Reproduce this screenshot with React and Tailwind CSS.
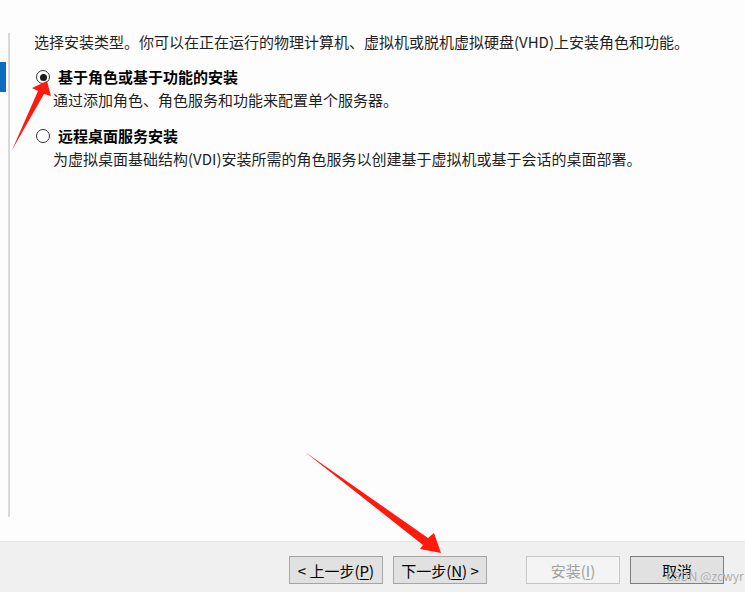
const FONT = "font-['Noto_Sans_CJK_SC','Noto_Sans',sans-serif]"

function Radio({ checked }) {
  return (
    <span className="flex h-[14px] w-[14px] shrink-0 items-center justify-center rounded-full border border-[#333] bg-white">
      {checked && <span className="h-[7px] w-[7px] rounded-full bg-[#1a1a1a]" />}
    </span>
  )
}

function Option({ checked, label, desc, className = '' }) {
  return (
    <div className={className}>
      <div className="flex h-[20px] items-center gap-[8px] pl-[2px]">
        <Radio checked={checked} />
        <span className="font-bold text-[15px] leading-[20px] text-black">{label}</span>
      </div>
      <p className="mt-[3px] pl-[19px] text-[15px] leading-[20px] text-[#1f1f1f]">{desc}</p>
    </div>
  )
}

function WizardButton({ children, disabled, dark }) {
  return (
    <button
      type="button"
      disabled={disabled}
      className={`flex h-[28px] w-[94px] items-center justify-center border text-[15px] leading-none ${
        disabled
          ? 'border-[#c6c6c6] bg-[#f4f4f4] text-[#a0a0a0]'
          : dark
            ? 'border-[#7f7f7f] bg-[#e1e1e1] text-black'
            : 'border-[#a5a5a5] bg-[#e1e1e1] text-black'
      }`}
    >
      {children}
    </button>
  )
}

function Arrows() {
  return (
    <svg
      className="pointer-events-none absolute left-0 top-0"
      width="745"
      height="592"
      viewBox="0 0 745 592"
      aria-hidden="true"
    >
      <polygon points="12,150 38,91 32,88 47,81 51,96 44,94" fill="#ff1a0d" />
      <polygon points="305,452 428,538 434,533 441,553 420,549 423,545" fill="#ff1a0d" />
    </svg>
  )
}

export default function App() {
  return (
    <div className={`relative flex h-[592px] w-[745px] flex-col overflow-hidden bg-[#fdfdfd] ${FONT}`}>
      <div className="flex flex-1">
        <div className="mt-[33px] h-[484px] w-[10px] shrink-0 border-r-2 border-[#d9d9d9]">
          <div className="mt-[29px] h-[30px] w-[6px] bg-[#0f6cbd]" />
        </div>
        <div className="pl-[24px] pt-[32px]">
          <p className="text-[15px] leading-[20px] text-[#1f1f1f]">
            选择安装类型。你可以在正在运行的物理计算机、虚拟机或脱机虚拟硬盘(VHD)上安装角色和功能。
          </p>
          <Option
            className="mt-[15px]"
            checked
            label="基于角色或基于功能的安装"
            desc="通过添加角色、角色服务和功能来配置单个服务器。"
          />
          <Option
            className="mt-[16px]"
            label="远程桌面服务安装"
            desc="为虚拟桌面基础结构(VDI)安装所需的角色服务以创建基于虚拟机或基于会话的桌面部署。"
          />
        </div>
      </div>

      <div className="flex h-[51px] shrink-0 items-start border-t border-[#e3e3e3] bg-[#f0f0f0] pr-[21px] pt-[14px]">
        <div className="ml-auto flex gap-[10px]">
          <WizardButton>
            &lt; 上一步(<span className="underline underline-offset-2">P</span>)
          </WizardButton>
          <WizardButton>
            下一步(<span className="underline underline-offset-2">N</span>) &gt;
          </WizardButton>
        </div>
        <div className="ml-[39px] flex gap-[10px]">
          <WizardButton disabled>
            安装(<span className="underline underline-offset-2">I</span>)
          </WizardButton>
          <WizardButton dark>取消</WizardButton>
        </div>
      </div>

      <Arrows />
      <span className="pointer-events-none absolute left-[666px] top-[569px] text-[12px] leading-[14px] text-[#a9a9a9] [text-shadow:0_0_1px_#fff]">
        CSDN @zcwyr
      </span>
    </div>
  )
}
